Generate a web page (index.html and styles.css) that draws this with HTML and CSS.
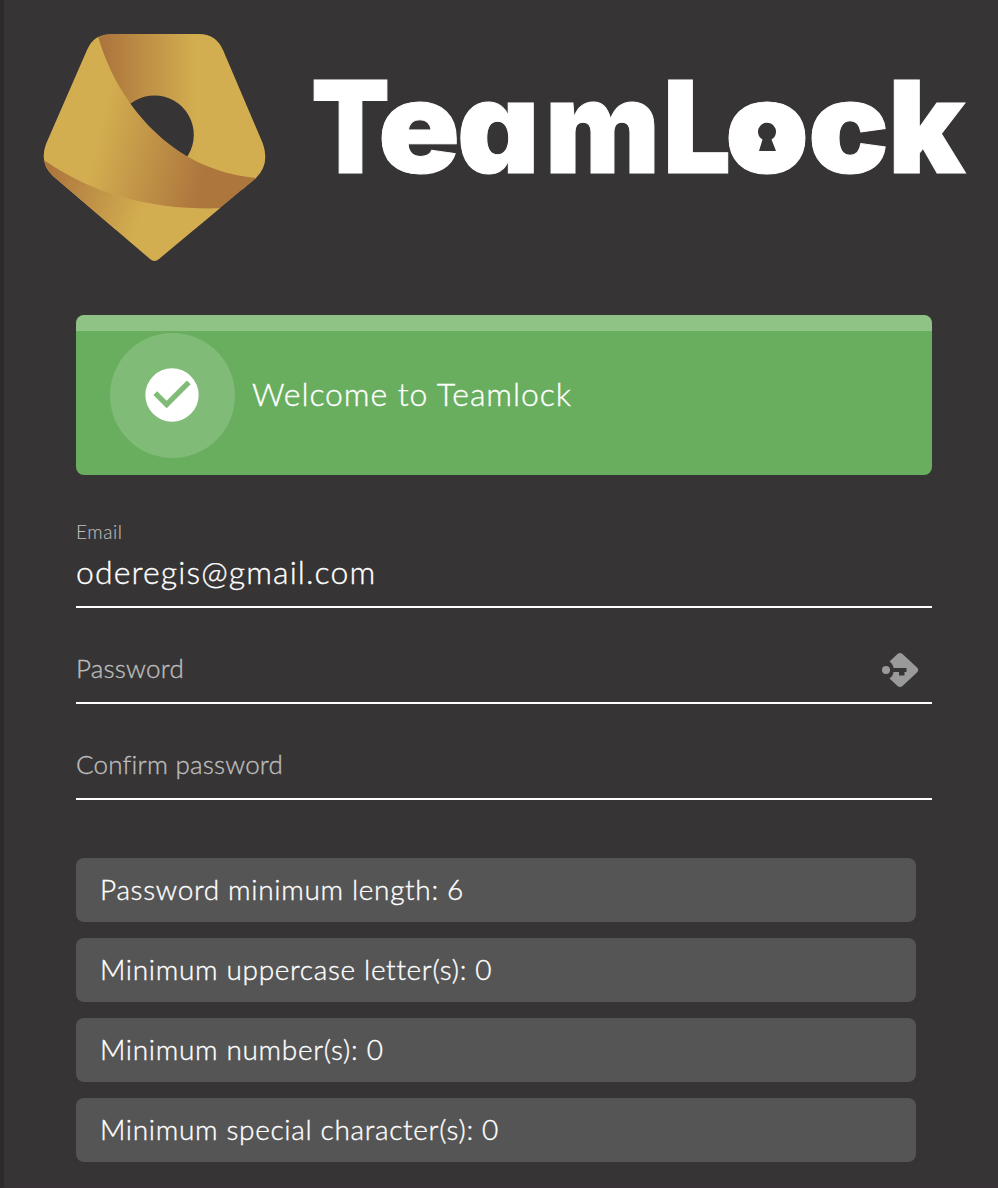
FILE: index.html
```html
<!DOCTYPE html>
<html lang="en">
<head>
<meta charset="utf-8">
<title>TeamLock</title>
<link rel="stylesheet" href="styles.css">
</head>
<body>
<main class="panel">
  <header class="brand">
    <svg class="logo" viewBox="0 0 998 290" role="img" aria-label="TeamLock">
      <defs>
        <linearGradient id="top" gradientUnits="userSpaceOnUse" x1="104" y1="0" x2="196" y2="0"><stop offset="0" stop-color="#ad763d"/><stop offset="1" stop-color="#d3ae50"/></linearGradient>
        <linearGradient id="band" gradientUnits="userSpaceOnUse" x1="94" y1="150" x2="203" y2="176"><stop offset="0" stop-color="#d3ae50"/><stop offset="1" stop-color="#ad763d"/></linearGradient>
        <linearGradient id="tip" gradientUnits="userSpaceOnUse" x1="48" y1="176" x2="143" y2="212"><stop offset="0" stop-color="#ad763d"/><stop offset="1" stop-color="#d3ae50"/></linearGradient>
        <clipPath id="gem"><path d="M111 34H199Q216 34 223 50L263 144Q270 164 256 178L159 259Q154.500 263 150 259L53 176Q39 163 46 144L87 50Q94 34 111 34Z"/></clipPath>
      </defs>
      <g clip-path="url(#gem)">
        <path fill="url(#top)" fill-rule="evenodd" d="M90 20H280V190H90ZM154.500 95.500a39.300 39.300 0 1 0 .01 0Z"/>
        <path fill="url(#band)" d="M30 20H94L98.500 38C118 104 172 171 257 178L290 180V230H30Z"/>
        <path fill="url(#tip)" d="M30 150L44 160C95 196 155 210 220 208.300L290 208V280H30Z"/>
      </g>
      <text class="wordmark" y="173"><tspan x="311" textLength="79" lengthAdjust="spacingAndGlyphs">T</tspan><tspan x="378" textLength="82" lengthAdjust="spacingAndGlyphs">e</tspan><tspan x="457">a</tspan><tspan x="545" textLength="115" lengthAdjust="spacingAndGlyphs">m</tspan><tspan x="663" textLength="68" lengthAdjust="spacingAndGlyphs">L</tspan><tspan x="725" textLength="84" lengthAdjust="spacingAndGlyphs">o</tspan><tspan x="808" textLength="81" lengthAdjust="spacingAndGlyphs">c</tspan><tspan x="888" textLength="77" lengthAdjust="spacingAndGlyphs">k</tspan></text>
      <circle cx="767" cy="137.500" r="25" fill="#fff"/>
      <path fill="#363435" d="M762.500 139.500A9 9 0 1 1 771.500 139.500L776 151H759Z"/>
    </svg>
  </header>

  <section class="notice">
    <span class="notice-icon">
      <svg viewBox="0 0 24 24"><path fill="#fff" fill-rule="evenodd" d="M12 2a10 10 0 1 0 0 20a10 10 0 0 0 0-20ZM10 17L5 12L6.410 10.590L10 14.170L17.590 6.580L19 8Z"/></svg>
    </span>
    <span class="notice-text">Welcome to Teamlock</span>
  </section>

  <form class="form">
    <div class="field filled"><span class="caption">Email</span><span class="value">oderegis@gmail.com</span></div>
    <div class="field"><span class="label">Password</span>
      <svg class="key" viewBox="0 0 40 40"><path fill="#9a9a9a" d="M17.500 4Q20 2 22.500 4L37 17.500Q39.500 20 37 22.500L22.500 36Q20 38 17.500 36L9.500 28.500Q13 26 13.500 22H19V25.500H24.500V22H26.500V18H13.500Q13 14 9.500 11.500Z"/><circle cx="6" cy="20" r="4" fill="#9a9a9a"/></svg>
    </div>
    <div class="field"><span class="label">Confirm password</span></div>
  </form>

  <ul class="rules">
    <li>Password minimum length: 6</li>
    <li>Minimum uppercase letter(s): 0</li>
    <li>Minimum number(s): 0</li>
    <li>Minimum special character(s): 0</li>
  </ul>
</main>
</body>
</html>
```
FILE: styles.css
```css
* { box-sizing: border-box; }
body { margin: 0; background: #363435; color: #fff; font-family: Lato, "Open Sans", sans-serif; font-weight: 300; -webkit-text-stroke: .35px currentColor; }
.panel { height: 1188px; border-left: 4px solid #2c2b2a; border-bottom: 1px solid #393036; padding: 0 66px 0 72px; overflow: hidden; }
.brand { height: 315px; margin: 0 -66px 0 -76px; }
.logo { display: block; width: 998px; height: 290px; -webkit-text-stroke: 0; }
.wordmark { font-family: Inter, sans-serif; font-weight: 900; font-size: 128px; fill: #fff; stroke: #fff; stroke-width: 1px; font-feature-settings: "cv11"; }
.notice { height: 160px; background: #69ae5f; border-top: 16px solid #8fc385; border-radius: 8px; display: flex; align-items: center; padding: 0 33.5px 16px; gap: 17.5px; }
.notice-icon { width: 125px; height: 125px; border-radius: 50%; background: #80bb78; display: flex; align-items: center; justify-content: center; flex: none; }
.notice-icon svg { width: 64px; height: 64px; }
.notice-text { font-size: 32px; letter-spacing: .9px; white-space: nowrap; padding-bottom: 4px; }
.form { padding-top: 37px; }
.field { height: 96px; border-bottom: 2px solid #fff; display: flex; align-items: center; justify-content: space-between; padding: 28px 12px 0 0; }
.filled { flex-direction: column; align-items: flex-start; justify-content: flex-start; padding-top: 8px; }
.caption { font-size: 19px; line-height: 24px; color: #bbb; letter-spacing: .6px; -webkit-text-stroke-width: .15px; }
.value { font-size: 32px; line-height: 40px; margin-top: 8px; letter-spacing: 1.1px; }
.label { font-size: 26px; line-height: 32px; color: #bcbcbc; letter-spacing: .2px; padding-bottom: 2px; }
.key { width: 40px; height: 40px; margin-top: 2px; }
.rules { list-style: none; margin: 58px 16px 0 0; padding: 0; display: flex; flex-direction: column; gap: 16px; }
.rules li { height: 64px; border-radius: 8px; background: #555; padding: 0 24px; font-size: 28px; line-height: 62px; letter-spacing: .67px; white-space: nowrap; }
```
